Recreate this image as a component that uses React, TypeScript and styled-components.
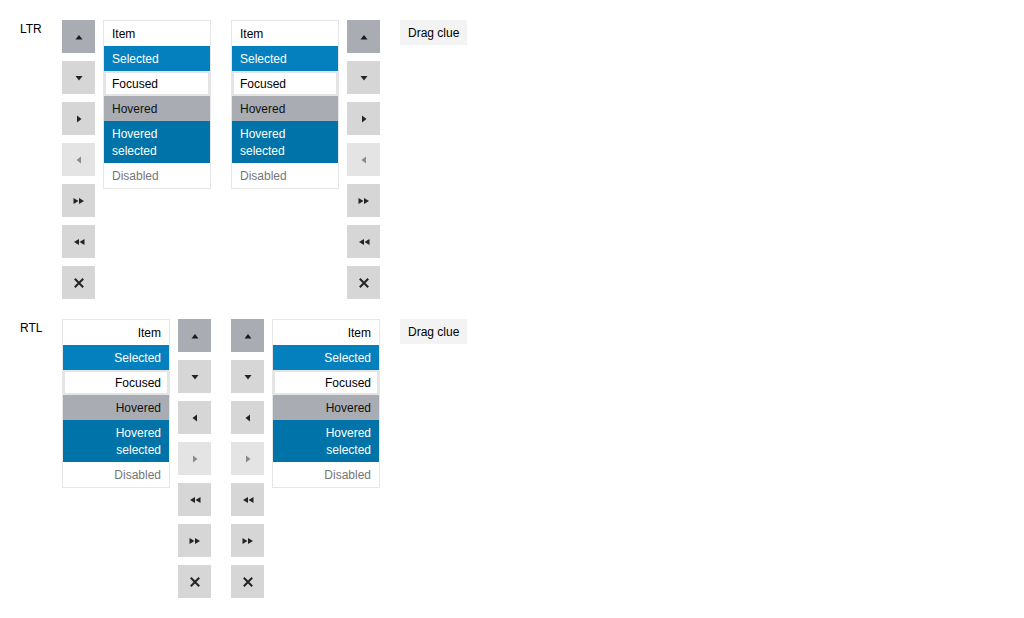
import React from "react";
import styled, { createGlobalStyle, css } from "styled-components";

const GlobalStyle = createGlobalStyle`
  html, body { margin: 0; padding: 0; background: #ffffff; }
  body {
    font-family: "Liberation Sans", Arial, Helvetica, sans-serif;
    font-size: 12px;
    line-height: 17px;
    color: #000;
  }
`;

const Page = styled.div`
  padding: 20px;
  display: flex;
  flex-direction: column;
  gap: 20px;
`;

const Row = styled.div`
  display: flex;
  align-items: flex-start;
`;

const Label = styled.div`
  width: 42px;
  flex: none;
  padding-top: 1px;
  line-height: 17px;
`;

const Groups = styled.div`
  display: flex;
  align-items: flex-start;
  gap: 20px;
`;

const ListBoxWrap = styled.div<{ $dir: "ltr" | "rtl" }>`
  display: flex;
  align-items: flex-start;
  gap: 8px;
  direction: ${(p) => p.$dir};
`;

const Toolbar = styled.div`
  display: flex;
  flex-direction: column;
  gap: 8px;
`;

const ToolButton = styled.div<{ $state?: "active" | "disabled" }>`
  width: 33px;
  height: 33px;
  display: flex;
  align-items: center;
  justify-content: center;
  background: #d6d6d6;
  color: #242424;
  ${(p) =>
    p.$state === "active" &&
    css`
      background: #a9acb3;
      color: #1a1a1a;
    `}
  ${(p) =>
    p.$state === "disabled" &&
    css`
      background: #e4e4e4;
      color: #8a8a8a;
    `}
`;

const List = styled.ul`
  margin: 0;
  padding: 0;
  list-style: none;
  width: 106px;
  border: 1px solid #e6e6e6;
  background: #fff;
`;

type ItemState = "normal" | "selected" | "focused" | "hovered" | "hoveredSelected" | "disabled";

const ListItem = styled.li<{ $state: ItemState }>`
  padding: 5px 8px 3px;
  line-height: 17px;
  color: #000;
  ${(p) =>
    p.$state === "selected" &&
    css`
      background: #0480be;
      color: #fff;
    `}
  ${(p) =>
    p.$state === "focused" &&
    css`
      box-shadow: inset 0 0 0 2px #e4e4e4;
    `}
  ${(p) =>
    p.$state === "hovered" &&
    css`
      background: #a9acb3;
      color: #111;
    `}
  ${(p) =>
    p.$state === "hoveredSelected" &&
    css`
      background: #0073a9;
      color: #fff;
    `}
  ${(p) =>
    p.$state === "disabled" &&
    css`
      color: #767676;
    `}
`;

const DragClue = styled.div`
  padding: 5px 8px 3px;
  background: #f3f3f3;
  line-height: 17px;
  white-space: nowrap;
`;

type IconName = "up" | "down" | "right" | "left" | "ff" | "rw" | "x";

const Icon: React.FC<{ name: IconName }> = ({ name }) => {
  const shapes: Record<IconName, React.ReactNode> = {
    up: <polygon points="4.5,10.5 11.5,10.5 8,6" fill="currentColor" />,
    down: <polygon points="4.5,6 11.5,6 8,10.5" fill="currentColor" />,
    right: <polygon points="6,4.5 6,11.5 10.5,8" fill="currentColor" />,
    left: <polygon points="10,4.5 10,11.5 5.5,8" fill="currentColor" />,
    ff: (
      <>
        <polygon points="2.5,5 2.5,11 7.5,8" fill="currentColor" />
        <polygon points="8,5 8,11 13,8" fill="currentColor" />
      </>
    ),
    rw: (
      <>
        <polygon points="13.5,5 13.5,11 8.5,8" fill="currentColor" />
        <polygon points="8,5 8,11 3,8" fill="currentColor" />
      </>
    ),
    x: (
      <path
        d="M3.8 3.8 L12.2 12.2 M12.2 3.8 L3.8 12.2"
        stroke="currentColor"
        strokeWidth="2"
        fill="none"
      />
    ),
  };
  return (
    <svg width="16" height="16" viewBox="0 0 16 16">
      {shapes[name]}
    </svg>
  );
};

const items: { text: string; state: ItemState }[] = [
  { text: "Item", state: "normal" },
  { text: "Selected", state: "selected" },
  { text: "Focused", state: "focused" },
  { text: "Hovered", state: "hovered" },
  { text: "Hovered selected", state: "hoveredSelected" },
  { text: "Disabled", state: "disabled" },
];

const ItemList: React.FC = () => (
  <List>
    {items.map((it) => (
      <ListItem key={it.text} $state={it.state}>
        {it.text}
      </ListItem>
    ))}
  </List>
);

const Tools: React.FC<{ dir: "ltr" | "rtl" }> = ({ dir }) => {
  const rtl = dir === "rtl";
  const buttons: { icon: IconName; state?: "active" | "disabled" }[] = [
    { icon: "up", state: "active" },
    { icon: "down" },
    { icon: rtl ? "left" : "right" },
    { icon: rtl ? "right" : "left", state: "disabled" },
    { icon: rtl ? "rw" : "ff" },
    { icon: rtl ? "ff" : "rw" },
    { icon: "x" },
  ];
  return (
    <Toolbar>
      {buttons.map((b, i) => (
        <ToolButton key={i} $state={b.state}>
          <Icon name={b.icon} />
        </ToolButton>
      ))}
    </Toolbar>
  );
};

const ListBox: React.FC<{ dir: "ltr" | "rtl"; toolbar: "start" | "end" }> = ({
  dir,
  toolbar,
}) => (
  <ListBoxWrap $dir={dir}>
    {toolbar === "start" && <Tools dir={dir} />}
    <ItemList />
    {toolbar === "end" && <Tools dir={dir} />}
  </ListBoxWrap>
);

export default function App() {
  return (
    <>
      <GlobalStyle />
      <Page>
        <Row>
          <Label>LTR</Label>
          <Groups>
            <ListBox dir="ltr" toolbar="start" />
            <ListBox dir="ltr" toolbar="end" />
            <DragClue>Drag clue</DragClue>
          </Groups>
        </Row>
        <Row>
          <Label>RTL</Label>
          <Groups>
            <ListBox dir="rtl" toolbar="start" />
            <ListBox dir="rtl" toolbar="end" />
            <DragClue>Drag clue</DragClue>
          </Groups>
        </Row>
      </Page>
    </>
  );
}
